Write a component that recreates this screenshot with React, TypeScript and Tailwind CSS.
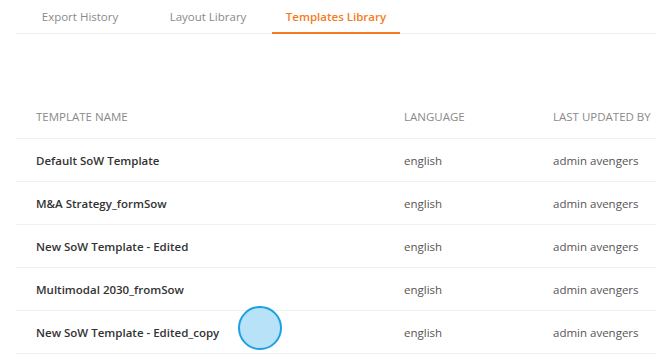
const rows = [
  'Default SoW Template',
  'M&A Strategy_formSow',
  'New SoW Template - Edited',
  'Multimodal 2030_fromSow',
  'New SoW Template - Edited_copy',
];

const tabs = ['Export History', 'Layout Library', 'Templates Library'];

export default function App() {
  return (
    <div
      className="min-h-screen bg-white pl-4 pr-[7px] text-[11.5px] whitespace-nowrap"
      style={{ fontFamily: '"Open Sans", sans-serif' }}
    >
      <div className="flex border-b border-[#eeeeee]">
        {tabs.map((t, i) => (
          <div
            key={t}
            className={`w-32 h-[34px] pt-[2px] flex items-center justify-center -mb-px ${
              i === 2
                ? 'text-[#f47c20] font-semibold border-b-2 border-[#f47c20]'
                : 'text-[#8a8a8a] border-b-2 border-transparent'
            }`}
          >
            {t}
          </div>
        ))}
      </div>

      <div className="mt-[61px]">
        <div className="flex h-[44px] pt-[1px] items-center border-b border-[#f0f0f0] text-[#8a8a8a] uppercase">
          <div className="w-[368px] pl-5">Template Name</div>
          <div className="w-[149px] pl-5">Language</div>
          <div className="flex-1 pl-5">Last Updated By</div>
        </div>
        {rows.map((name, i) => (
          <div key={name} className="relative flex h-[43px] pt-[2px] items-center border-b border-[#f0f0f0]">
            <div className="w-[368px] pl-5 font-semibold text-[#333333]">{name}</div>
            <div className="w-[149px] pl-5 text-[#555555]">english</div>
            <div className="flex-1 pl-5 text-[#555555]">admin avengers</div>
            {i === 4 && (
              <div className="absolute left-[222px] top-[-5px] w-[44px] h-[44px] rounded-full bg-[#b8e2f7] border-2 border-[#1aa0e3]" />
            )}
          </div>
        ))}
      </div>
    </div>
  );
}
